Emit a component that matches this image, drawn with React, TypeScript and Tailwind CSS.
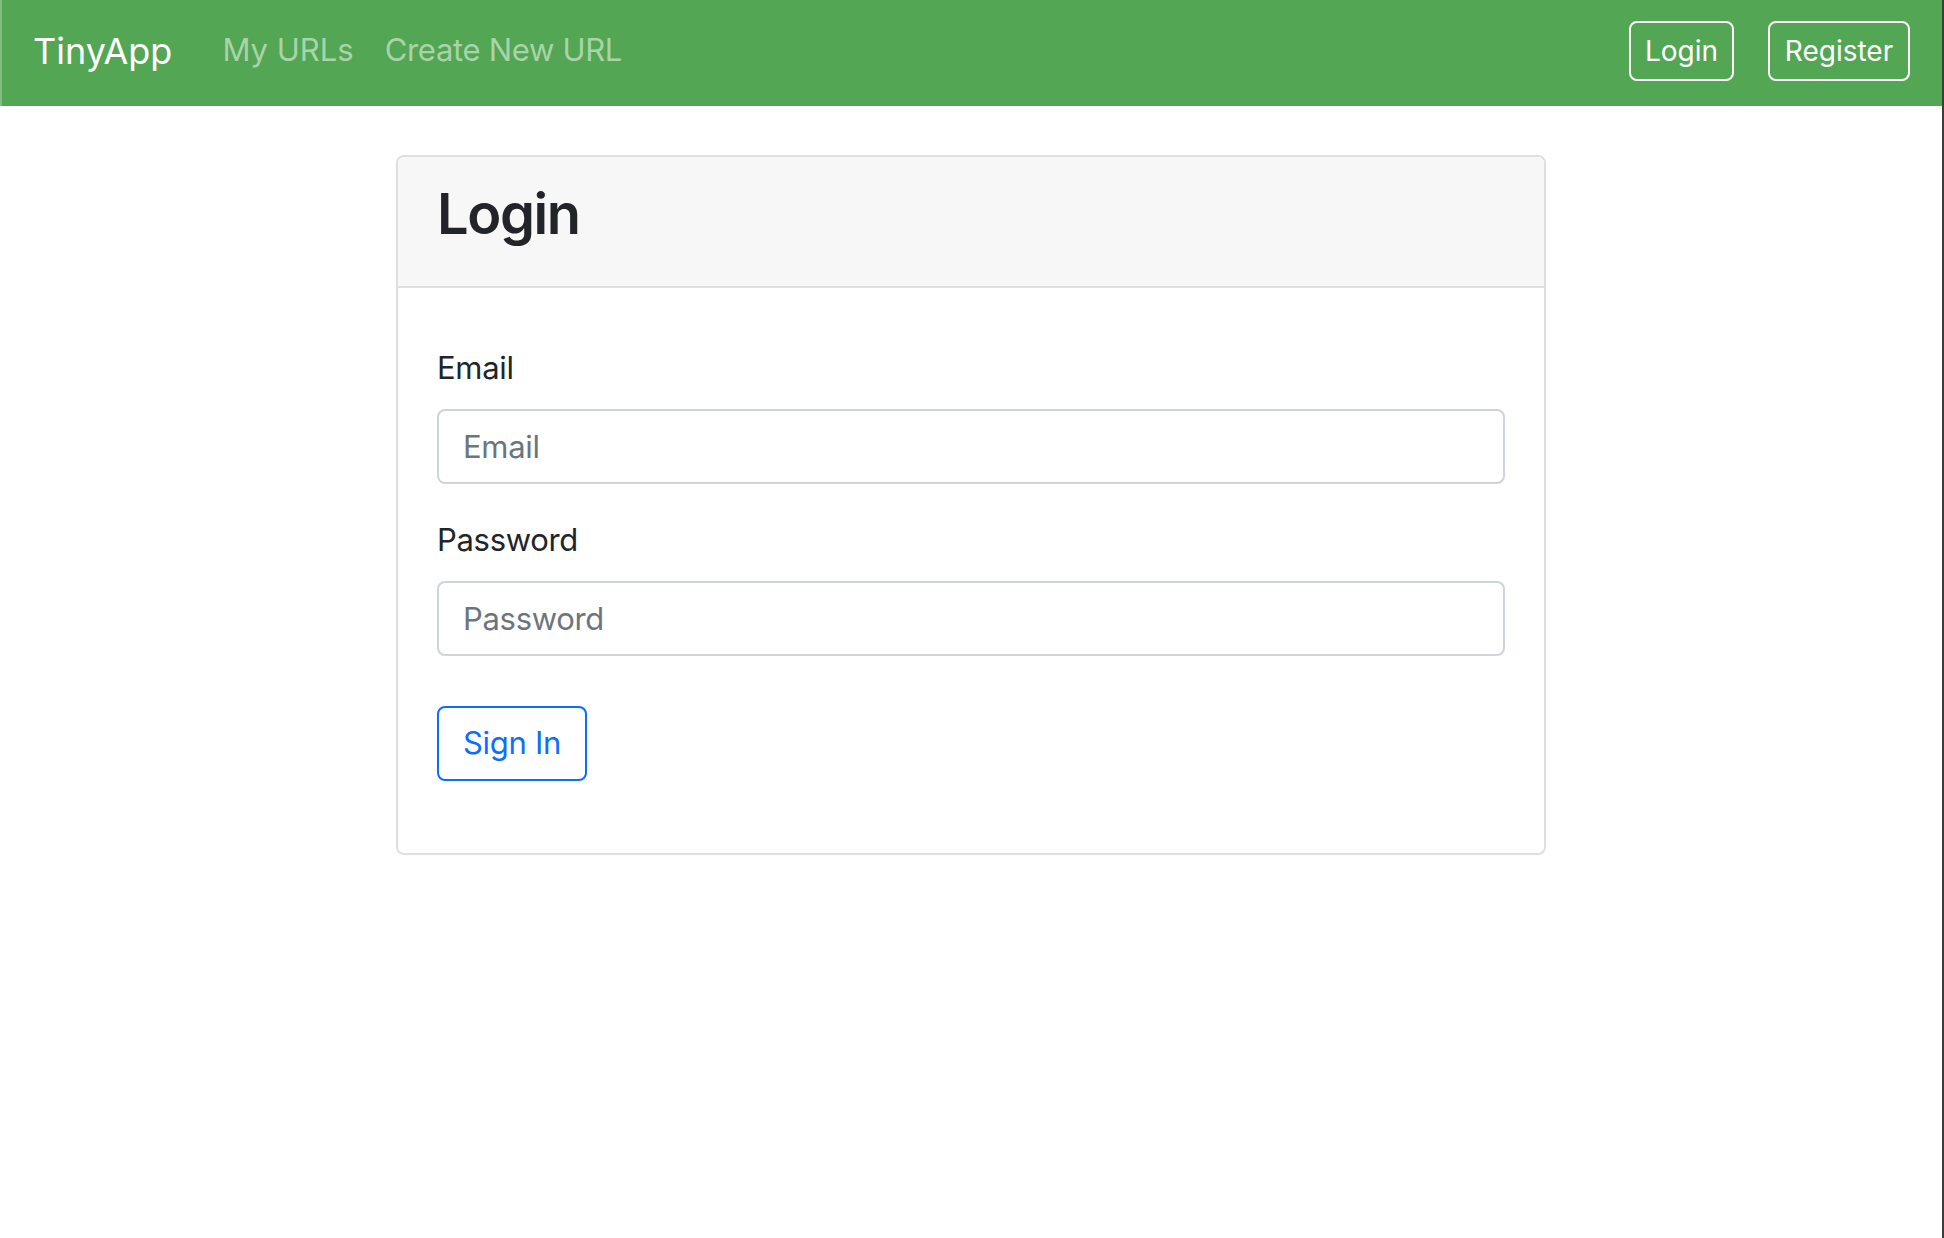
import React from 'react';

const font = { fontFamily: 'Inter, "Liberation Sans", sans-serif' };

const Field: React.FC<{ label: string; type: string; className?: string }> = ({ label, type, className }) => (
  <div className={className}>
    <label className="block text-[31px] tracking-[-0.01em] leading-[48px] text-[#212529] mb-[17px]">{label}</label>
    <input
      type={type}
      placeholder={label}
      className="block w-full h-[75px] px-[24px] text-[31px] tracking-[-0.01em] text-[#212529] placeholder:text-[#6c757d] bg-white border-2 border-[#ced4da] rounded-[8px] outline-none"
    />
  </div>
);

const App: React.FC = () => {
  return (
    <div className="min-h-screen bg-white border-r-2 border-[#3c3c40]" style={font}>
      <nav className="h-[106px] pb-[5px] flex items-center bg-[#53a653] border-l-2 border-[#80bd80] pl-[31px] pr-[32px]">
        <a className="text-[36px] text-white mr-[50px]">TinyApp</a>
        <a className="text-[31px] text-[#a9d3a9] mr-[31px]">My URLs</a>
        <a className="text-[31px] tracking-[-0.01em] text-[#a9d3a9]">Create New URL</a>
        <div className="ml-auto flex items-center gap-[34px]">
          <button className="w-[105px] h-[60px] border-2 border-white rounded-[8px] text-[28px] text-white">Login</button>
          <button className="w-[142px] h-[60px] border-2 border-white rounded-[8px] text-[28px] text-white">Register</button>
        </div>
      </nav>

      <div className="flex justify-center pt-[49px]">
        <div className="w-[1150px] border-2 border-[#dfdfdf] rounded-[8px] overflow-hidden">
          <div className="bg-[#f7f7f7] border-b-2 border-[#dfdfdf] pl-[39px] pt-[22px] pb-[37px]">
            <h2 className="text-[56px] leading-[70px] font-semibold tracking-[-0.025em] text-[#212529]">Login</h2>
          </div>
          <form className="px-[39px] pt-[56px] pb-[72px]">
            <Field label="Email" type="email" className="mb-[32px]" />
            <Field label="Password" type="password" />
            <button
              type="button"
              className="mt-[50px] h-[75px] px-[24px] border-2 border-[#0d6efd] rounded-[8px] text-[31px] tracking-[-0.01em] text-[#0d6efd] bg-white"
            >
              Sign In
            </button>
          </form>
        </div>
      </div>
    </div>
  );
};

export default App;
